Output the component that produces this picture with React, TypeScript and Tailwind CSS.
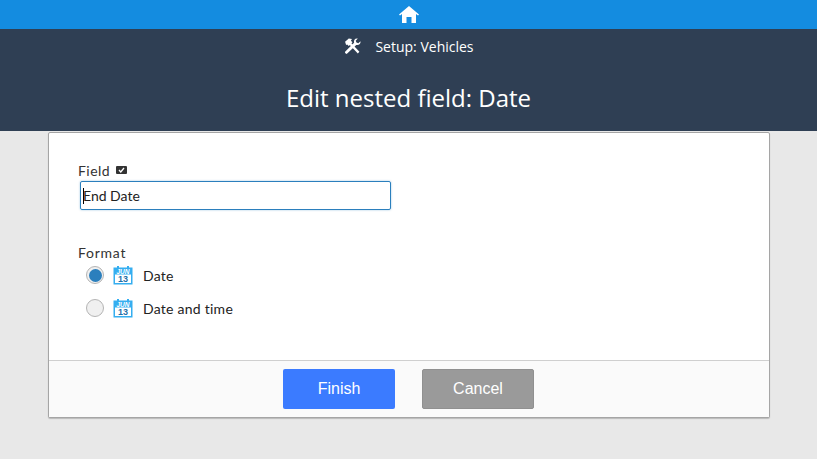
const HomeIcon = () => (
  <svg width="20" height="17" viewBox="0 0 20 17" fill="#ffffff">
    <path d="M10 0 L20 8.5 L19 9.5 L17 8 L17 17 L12.5 17 L12.5 11 L7.5 11 L7.5 17 L3 17 L3 8 L1 9.5 L0 8.5 Z" />
  </svg>
)

const ToolsIcon = () => (
  <svg width="17" height="17" viewBox="0 0 16 16" fill="#ffffff">
    {/* hammer */}
    <path d="M1 3.5 L4.5 0.5 L7.5 1 L6.5 2.5 L8 4 L7 5 L14.5 13 L13 14.5 L5.5 6.5 L4.5 7.5 L3 6 L2 6.5 Z" />
    {/* wrench */}
    <path d="M15.5 3 L13.5 5 L11.7 4.3 L11 2.5 L13 0.5 C10.5 0 8.8 2 9.5 4.5 L1 13 L1 14 L2.5 15 L11.5 6.5 C14 7 16 5.5 15.5 3 Z" />
  </svg>
)

const CalendarIcon = () => (
  <svg width="20" height="19" viewBox="0 0 20 19" className="shrink-0">
    <rect x="0.5" y="1.5" width="19" height="17" fill="#35aef0" />
    <rect x="4" y="0" width="2" height="3" fill="#35aef0" />
    <rect x="14" y="0" width="2" height="3" fill="#35aef0" />
    <rect x="2" y="8.5" width="16" height="8.5" fill="#ffffff" />
    <text x="10" y="7.5" textAnchor="middle" fontSize="6.5" fontStyle="italic" fontWeight="700" fill="#ffffff" fontFamily="'Liberation Sans', sans-serif">
      JUN
    </text>
    <text x="10" y="16.3" textAnchor="middle" fontSize="9" fontWeight="700" fill="#1f6fa8" fontFamily="'Liberation Sans', sans-serif">
      13
    </text>
  </svg>
)

const Radio = ({ checked }: { checked?: boolean }) => (
  <div className="w-[18px] h-[18px] rounded-full border-[1.5px] border-[#b4b4b4] bg-[#f0f0f0] flex items-center justify-center shrink-0">
    {checked && <div className="w-[13px] h-[13px] rounded-full bg-[#2b7fbd]"></div>}
  </div>
)

const formats = [
  { label: "Date", checked: true },
  { label: "Date and time", checked: false },
]

export default function App() {
  return (
    <div className="h-[459px] w-[817px] overflow-hidden bg-[#e8e8e8] font-['Lato',sans-serif]">
      {/* Home bar */}
      <div className="h-[29px] bg-[#148ce0] flex items-center justify-center">
        <HomeIcon />
      </div>

      {/* Page header */}
      <div className="h-[102px] bg-[#2f3f54] text-white flex flex-col items-center font-['Open_Sans',sans-serif]">
        <div className="flex items-center mt-[7px] h-[20px] pl-[1px]">
          <ToolsIcon />
          <span className="text-[14px] ml-[14px]">Setup: Vehicles</span>
        </div>
        <h1 className="text-[24px] leading-[32px] mt-[26px]">Edit nested field: Date</h1>
      </div>

      {/* Card */}
      <div className="mx-[48px] mt-[1px] w-[722px] h-[286px] bg-white border border-[#a5a5a5] rounded-[2px] flex flex-col shadow-[0_1px_1px_rgba(0,0,0,0.2)]">
        <div className="h-[227px] pl-[29px] pt-[28px] text-[#333]">
          <div className="flex items-center h-[18px] text-[14px] tracking-[0.45px]">
            Field
            <span className="ml-[6px] w-[11px] h-[8px] bg-[#333] rounded-[1px] flex items-center justify-center">
              <svg width="7" height="6" viewBox="0 0 7 6">
                <path d="M1 3l1.8 2L6 1" stroke="#fff" strokeWidth="1.3" fill="none" />
              </svg>
            </span>
          </div>
          <div className="ml-[2px] mt-[2px] w-[311px] h-[29px] border border-[#2b7fbd] rounded-[2px] flex items-center pl-[2px] text-[14px] text-[#222] shadow-[0_0_2px_rgba(43,127,189,0.5)]">
            <span className="w-[1px] h-[16px] bg-black mr-[-1px]"></span>
            End Date
          </div>

          <div className="mt-[33px] h-[18px] flex items-center text-[14px] tracking-[0.75px]">Format</div>
          <div className="flex flex-col gap-[13px] ml-[8px] mt-[4px]">
            {formats.map((format) => (
              <div key={format.label} className="flex items-center h-[20px]">
                <Radio checked={format.checked} />
                <div className="ml-[9px]">
                  <CalendarIcon />
                </div>
                <span className="ml-[10px] pt-[1px] text-[14px] text-[#222] tracking-[0.25px]">{format.label}</span>
              </div>
            ))}
          </div>
        </div>

        {/* Footer */}
        <div className="flex-1 border-t border-[#cfcfcf] bg-[#fafafa] flex items-center justify-center gap-[27px] pr-[1px] font-['Liberation_Sans',sans-serif] text-[16px] text-white">
          <button className="w-[112px] h-[40px] rounded-[2px] bg-[#3b7bff]">Finish</button>
          <button className="w-[112px] h-[40px] rounded-[2px] bg-[#9a9a9a] border border-[#909090]">Cancel</button>
        </div>
      </div>
    </div>
  )
}
